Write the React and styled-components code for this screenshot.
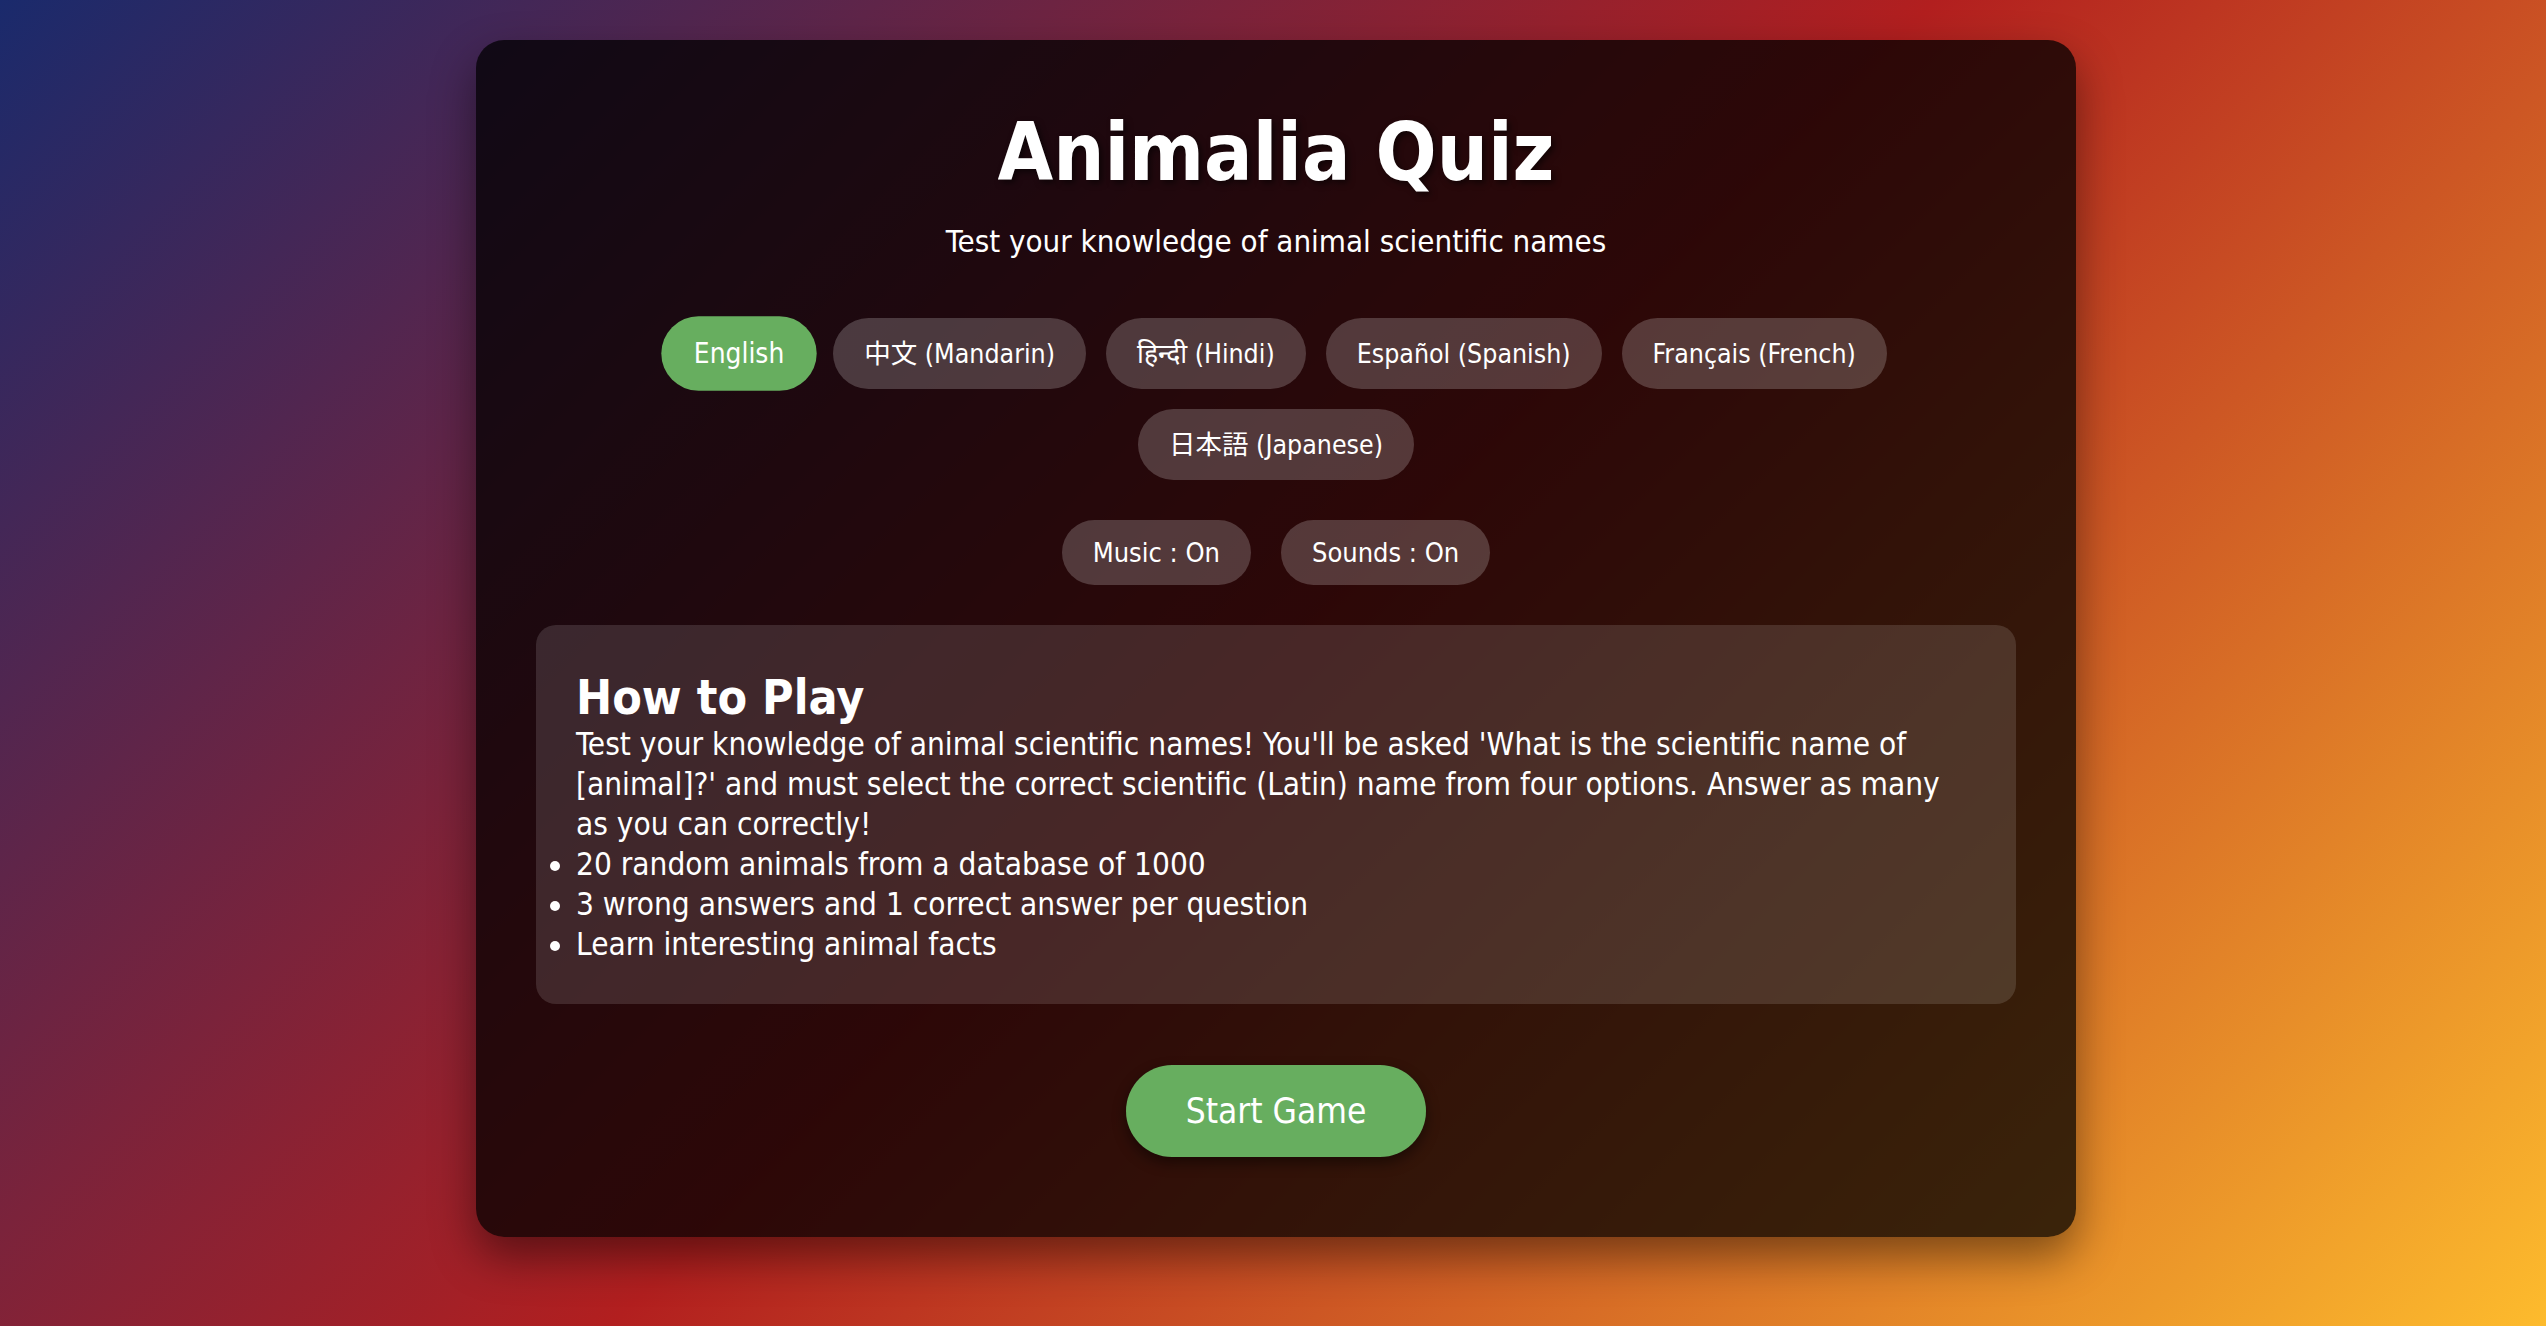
import { useState } from 'react'
import styled, { createGlobalStyle, css } from 'styled-components'

const GlobalStyle = createGlobalStyle`
    html {
        min-height: 100%;
    }
    body {
        margin: 0;
        min-height: 100vh;
        background: linear-gradient(135deg, #1a2a6c, #b21f1f, #fdbb2d);
        font-family: "DejaVu Sans", "Noto Sans Devanagari", "Noto Sans CJK JP", sans-serif;
        font-stretch: condensed;
        color: #ffffff;
    }
`

const Page = styled.div`
    display: flex;
    justify-content: center;
    padding: 40px 0 89px 6px;
`

const Card = styled.div`
    width: 1600px;
    box-sizing: border-box;
    padding: 65px 60px 80px;
    border-radius: 28px;
    background: rgba(0, 0, 0, 0.75);
    box-shadow: 0 20px 45px rgba(0, 0, 0, 0.45);
    display: flex;
    flex-direction: column;
    align-items: center;
    text-align: center;
`

const Title = styled.h1`
    margin: 0;
    font-size: 80px;
    line-height: 1.2;
    font-weight: 700;
    text-shadow: 3px 3px 6px rgba(0, 0, 0, 0.55);
`

const Subtitle = styled.p`
    margin: 22px 0 0;
    font-size: 31px;
`

const PillRow = styled.div`
    display: flex;
    flex-wrap: wrap;
    justify-content: center;
    gap: ${props => props.gap || 20}px;
    margin-top: ${props => props.top || 40}px;
`

const Pill = styled.button`
    border: none;
    border-radius: 40px;
    font-family: inherit;
    font-stretch: condensed;
    color: #ffffff;
    cursor: pointer;
    line-height: 33px;
    background: rgba(255, 255, 255, 0.2);
    ${props => props.small ? css`
        font-size: 27px;
        padding: 16px 31px;
    ` : css`
        font-size: 26.5px;
        padding: 19px 31px;
    `}
    ${props => props.active && css`
        background: #67ae5f;
        transform: scale(1.05);
    `}
`

const HowTo = styled.div`
    align-self: stretch;
    margin-top: 40px;
    padding: 46px 40px 40px;
    border-radius: 20px;
    background: rgba(255, 255, 255, 0.13);
    text-align: left;
`

const HowTitle = styled.h2`
    margin: 0;
    font-size: 48px;
    line-height: 1.1;
    font-weight: 700;
`

const HowText = styled.p`
    margin: 0;
    font-size: 31.3px;
    line-height: 40px;
`

const Rules = styled.ul`
    margin: 0;
    padding: 0;
    font-size: 31.3px;
    line-height: 40px;
`

const StartButton = styled.button`
    margin-top: 61px;
    border: none;
    border-radius: 50px;
    padding: 24px 60px;
    font-family: inherit;
    font-stretch: condensed;
    font-size: 35px;
    line-height: 44px;
    color: #ffffff;
    background: #67ae5f;
    box-shadow: 0 6px 14px rgba(0, 0, 0, 0.45);
    cursor: pointer;
`

const languages = [
    'English',
    '中文 (Mandarin)',
    'हिन्दी (Hindi)',
    'Español (Spanish)',
    'Français (French)',
    '日本語 (Japanese)',
]

const rules = [
    '20 random animals from a database of 1000',
    '3 wrong answers and 1 correct answer per question',
    'Learn interesting animal facts',
]

const App = () => {
    const [lang, setLang] = useState('English')
    const [music, setMusic] = useState(true)
    const [sounds, setSounds] = useState(true)

    return (
        <Page>
            <GlobalStyle />
            <Card>
                <Title>Animalia Quiz</Title>
                <Subtitle>Test your knowledge of animal scientific names</Subtitle>
                <PillRow top={59}>
                    {languages.map(l => (
                        <Pill key={l} active={l === lang} onClick={() => setLang(l)}>{l}</Pill>
                    ))}
                </PillRow>
                <PillRow top={40} gap={30}>
                    <Pill small onClick={() => setMusic(!music)}>Music : {music ? 'On' : 'Off'}</Pill>
                    <Pill small onClick={() => setSounds(!sounds)}>Sounds : {sounds ? 'On' : 'Off'}</Pill>
                </PillRow>
                <HowTo>
                    <HowTitle>How to Play</HowTitle>
                    <HowText>
                        Test your knowledge of animal scientific names! You'll be asked 'What is the scientific name of [animal]?' and must select the correct scientific (Latin) name from four options. Answer as many as you can correctly!
                    </HowText>
                    <Rules>
                        {rules.map(r => <li key={r}>{r}</li>)}
                    </Rules>
                </HowTo>
                <StartButton>Start Game</StartButton>
            </Card>
        </Page>
    )
}

export default App
